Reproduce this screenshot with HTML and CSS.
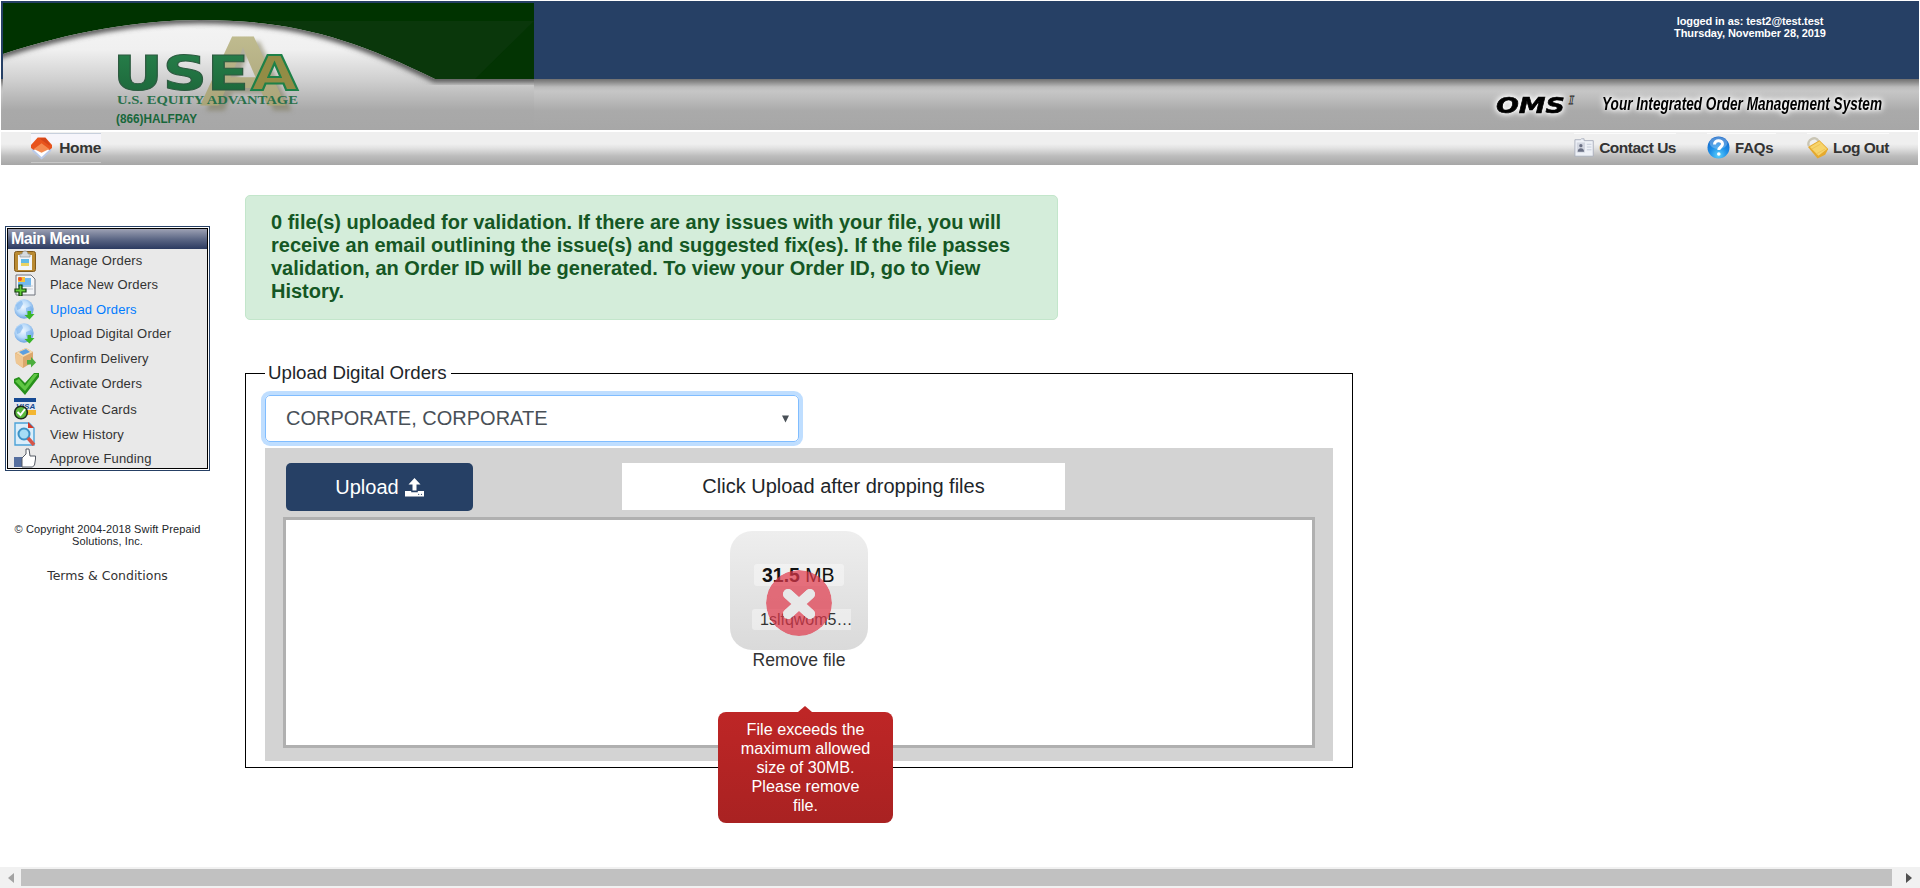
FILE: index.html
```html
<!DOCTYPE html>
<html lang="en">
<head>
<meta charset="utf-8">
<title>Upload Digital Orders</title>
<link rel="stylesheet" href="styles.css">
</head>
<body>
<header class="banner">
  <svg class="logo" width="531" height="127" viewBox="3 3 531 127">
    <defs>
      <linearGradient id="dome" gradientUnits="userSpaceOnUse" x1="0" y1="20" x2="0" y2="130">
        <stop offset="0" stop-color="#f4f4f4"/><stop offset=".27" stop-color="#f0f0f0"/>
        <stop offset=".55" stop-color="#cfcfcf"/><stop offset=".82" stop-color="#a9a9a9"/><stop offset="1" stop-color="#a7a7a7"/>
      </linearGradient>
      <linearGradient id="gold" x1="0" y1="0" x2="0" y2="1">
        <stop offset="0" stop-color="#c6c296"/><stop offset="1" stop-color="#a39d72"/>
      </linearGradient>
      <linearGradient id="leaf" x1="0" y1="0" x2="0" y2="1">
        <stop offset="0" stop-color="#28824c"/><stop offset="1" stop-color="#1b6438"/>
      </linearGradient>
      <filter id="soft"><feGaussianBlur stdDeviation="2.6"/></filter>
      <clipPath id="domeclip"><path d="M3 54C70 32 140 20 200 20C290 20 350 37 435 79H534V130H3Z"/></clipPath>
    </defs>
    <rect x="3" y="3" width="531" height="127" fill="#003300"/>
    <path d="M260 21H534V79H430C380 50 330 35 260 21Z" fill="#0a370b"/>
    <path d="M534 21V79H475Z" fill="#033403"/>
    <g clip-path="url(#domeclip)">
      <rect x="3" y="3" width="531" height="127" fill="url(#dome)"/>
      <path d="M-10 58L3 54C70 32 140 20 200 20C290 20 350 37 435 79H545" fill="none" stroke="#555" stroke-width="7" filter="url(#soft)"/>
    </g>
    <text class="gold-mark" x="197" y="106" font-size="101" textLength="92" lengthAdjust="spacingAndGlyphs" fill="url(#gold)">A</text>
    <text class="brand ext" x="113" y="90" font-size="48" textLength="136" lengthAdjust="spacingAndGlyphs" fill="url(#leaf)" stroke="#2d5a40" stroke-width="1">USE</text>
    <text class="brand ext" x="251" y="90" font-size="48" textLength="47" lengthAdjust="spacingAndGlyphs" fill="#938c45" stroke="#1e8148" stroke-width="1.8">A</text>
    <text class="motto" x="117" y="103.500" font-size="13" textLength="181" lengthAdjust="spacingAndGlyphs" fill="#28704a">U.S. EQUITY ADVANTAGE</text>
    <text class="brand" x="116" y="122.500" font-size="12.500" textLength="81" lengthAdjust="spacingAndGlyphs" fill="#17673a">(866)HALFPAY</text>
  </svg>
  <div class="banner-side">
    <p class="login">logged in as: test2@test.test<br>Thursday, November 28, 2019</p>
    <svg class="tagline" width="400" height="36" viewBox="1488 84 400 36">
      <text class="oms" x="1496" y="113" font-size="21.500" textLength="69" lengthAdjust="spacingAndGlyphs">OMS</text>
      <text class="sup" x="1569" y="104" font-size="12">I</text>
      <text class="slogan" x="1602" y="109.500" font-size="18" textLength="280" lengthAdjust="spacingAndGlyphs">Your Integrated Order Management System</text>
    </svg>
  </div>
</header>
<nav class="navbar">
  <a class="nav-item home">
    <svg width="22" height="24" viewBox="0 0 22 24"><path d="M1 10h20v5L11 24 1 15z" fill="#b9c9e8"/><path d="M3 12l8-4 8 4v2l-8 7.500L3 14z" fill="#fff"/><path d="M0 9L7 1h8l7 8v3l-3 2-8-5-8 5-3-2z" fill="#e8531c"/><path d="M3 13l8-6 8 6-8 4z" fill="#f58a4f"/><path d="M9 2l6-.500 5 7-1 1z" fill="#d2451a"/></svg>
    <span class="w-home">Home</span></a>
  <div class="nav-right">
    <a class="nav-item contact">
      <svg width="22" height="21" viewBox="0 0 22 21"><path d="M1 2h6l1-1h3v2h10v17H1z" fill="#eef1f7" stroke="#a9aebb"/><rect x="3" y="5" width="9" height="11" fill="#d3d7e1"/><circle cx="7.500" cy="8.500" r="1.800" fill="#6a7084"/><path d="M4 15c0-5 7-5 7 0z" fill="#6a7084"/><path d="M14 7h5M14 10h5M14 13h5" stroke="#c3c9d8"/></svg>
      <span class="w-contact">Contact Us</span></a>
    <a class="nav-item faqs">
      <svg width="23" height="23" viewBox="0 0 23 23"><defs><radialGradient id="ball" cx=".5" cy=".85" r=".8"><stop offset="0" stop-color="#5cd0fb"/><stop offset=".5" stop-color="#1d8fe8"/><stop offset="1" stop-color="#1467c8"/></radialGradient></defs><circle cx="11.500" cy="11.500" r="11" fill="url(#ball)"/><ellipse cx="11.500" cy="7" rx="9" ry="6" fill="#fff" opacity=".25"/><path d="M7.500 8.500c0-5 8-5 8-.500 0 3-3.700 3-3.700 6" fill="none" stroke="#fff" stroke-width="3"/><circle cx="11.800" cy="18" r="1.800" fill="#fff"/></svg>
      <span class="w-faqs">FAQs</span></a>
    <a class="nav-item logout">
      <svg width="22" height="23" viewBox="0 0 22 23"><path d="M2 10C-1 4 9-2 12 5" fill="none" stroke="#c9c5b4" stroke-width="2.500"/><path d="M1 11L13 4l9 9-3 6-8 4z" fill="#e5a92e"/><path d="M3 11l10-6 8 8-9 7z" fill="#f7d46c"/><path d="M5 13l9-5M10 18l9-5" stroke="#edc356" stroke-width="1"/></svg>
      <span class="w-logout">Log Out</span></a>
  </div>
</nav>
<div class="page">
  <aside class="sidebar">
    <div class="menu"><div class="menu-inner">
      <h2 class="menu-title">Main Menu</h2>
      <a class="row r24"><svg class="ico" viewBox="0 0 22 22"><rect x=".5" y="1.500" width="21" height="20" rx="2" fill="#b98a32" stroke="#80591a"/><path d="M4 5h14v15H4z" fill="#f3f6fa"/><path d="M6 4h2c0-4 6-4 6 0h2v3H6z" fill="#d6dadd" stroke="#8f9494" stroke-width=".7"/><path d="M7 9h8v7H7z" fill="#61b9e7"/><path d="M7 13h8v3H7z" fill="#e9d264"/></svg><span>Manage Orders</span></a>
      <a class="row r26"><svg class="ico" viewBox="0 0 22 22"><path d="M2 1h15l4 4v16H2z" fill="#f3f5f8" stroke="#6f737c"/><path d="M4 4h13v9H4z" fill="#72b9ed"/><path d="M4 3h7v5H4z" fill="#f5c33a"/><circle cx="6" cy="5" r="2" fill="#e9502d"/><path d="M10 12h9M10 15h9" stroke="#c5c9d0"/><path d="M5 11h3v4h4v3H8v4H5v-4H1v-3h4z" fill="#62cd38" stroke="#123f0c" stroke-width="1.200"/></svg><span>Place New Orders</span></a>
      <a class="row r24b active"><svg class="ico" viewBox="0 0 22 22"><defs><radialGradient id="globe" cx=".45" cy=".4" r=".6"><stop offset="0" stop-color="#eef7ff"/><stop offset=".55" stop-color="#bcdcfa"/><stop offset="1" stop-color="#6ba3e2"/></radialGradient></defs><circle cx="10" cy="10" r="9.700" fill="url(#globe)"/><path d="M2 6q3-4 6-4l1 3-3 5-3 1zM12 9l5-2 2 4-4 5-3-3z" fill="#6eaaea" opacity=".55"/><path d="M13.500 12h3.500v3h3.500L15.500 20.500 10.500 16h3z" fill="#39b528"/></svg><span>Upload Orders</span></a>
      <a class="row r24b"><svg class="ico" viewBox="0 0 22 22"><circle cx="10" cy="10" r="9.700" fill="url(#globe)"/><path d="M2 6q3-4 6-4l1 3-3 5-3 1zM12 9l5-2 2 4-4 5-3-3z" fill="#6eaaea" opacity=".55"/><path d="M13.500 12h3.500v3h3.500L15.500 20.500 10.500 16h3z" fill="#39b528"/></svg><span>Upload Digital Order</span></a>
      <a class="row r26"><svg class="ico" viewBox="0 0 22 22"><path d="M1 6l11-5 7 4v10L9 21l-7-5z" fill="#dba76c"/><path d="M1 6l8 4v11l-7-5z" fill="#efc793"/><path d="M2 6l10-5 7 4-10 5z" fill="#f5d9ad"/><path d="M5 5l7-3 4 3-7 3z" fill="#5b9fe0"/><path d="M13 13h4v-3l5 5.500-5 5v-3h-4z" fill="#4cae3e"/></svg><span>Confirm Delivery</span></a>
      <a class="row r26"><svg class="ico wide" viewBox="0 0 25 22"><path d="M0 10L0 6l5-2 6 6L20 0h5v4L11 22z" fill="#27901b"/><path d="M1 8l4-2 6 7L20 1h4L11 18z" fill="#5fc744"/></svg><span>Activate Orders</span></a>
      <a class="row r26"><svg class="ico" viewBox="0 0 22 22"><path d="M0 0h22v4H0z" fill="#174a93"/><path d="M0 4h22v8H0z" fill="#e3e7f0"/><path d="M10 12h12v5H10z" fill="#f3b632"/><text x="2" y="11" class="visa">VISA</text><circle cx="7" cy="14.500" r="6.300" fill="#5bb93c" stroke="#1b2b1c" stroke-width="1.600"/><path d="M3.500 14l3 3 4.500-6" fill="none" stroke="#fff" stroke-width="2"/></svg><span>Activate Cards</span></a>
      <a class="row r24b"><svg class="ico tall" viewBox="0 0 22 24"><path d="M1 1h14l5 5v17H1z" fill="#dbeefa" stroke="#4ca3d8" stroke-width="1.400"/><path d="M14 0l6 6h-6z" fill="#d43a28"/><circle cx="10" cy="12" r="5.500" fill="#a5def6" stroke="#3d92c5" stroke-width="2"/><path d="M14 16l6 7" stroke="#d65548" stroke-width="3.500"/></svg><span>View History</span></a>
      <a class="row r24b"><svg class="ico" viewBox="0 0 22 20"><path d="M0 9h8v10H0z" fill="#566f9f"/><path d="M8 10l4-4V1h3l1 7h5.500v3l-1 6-2 2H8z" fill="#fff" stroke="#555a64" stroke-width="1"/></svg><span>Approve Funding</span></a>
    </div></div>
    <p class="copyright">© Copyright 2004-2018 Swift Prepaid<br>Solutions, Inc.</p>
    <p class="terms">Terms &amp; Conditions</p>
  </aside>
  <main class="content">
    <div class="alert">0 file(s) uploaded for validation. If there are any issues with your file, you will<br>receive an email outlining the issue(s) and suggested fix(es). If the file passes<br>validation, an Order ID will be generated. To view your Order ID, go to View<br>History.</div>
    <fieldset class="orders">
      <legend>Upload Digital Orders</legend>
      <div class="select"><span>CORPORATE, CORPORATE</span><svg width="8" height="8" viewBox="0 0 8 8"><path d="M0 .5h7L3.500 7.500z" fill="#495057"/></svg></div>
      <section class="uploader">
        <div class="toolbar">
          <button class="upload">Upload <svg width="19" height="19" viewBox="0 0 19 19"><path fill="#fff" d="M9.500 0l6 6.500h-4V12.500h-4V6.500h-4zM0 13h6.200v1.200h6.600V13H19v5.500H0z"/><circle cx="13.700" cy="16.300" r=".6" fill="#264065"/><circle cx="16.500" cy="16.300" r=".6" fill="#264065"/></svg></button>
          <div class="hint">Click Upload after dropping files</div>
        </div>
        <div class="dropzone">
          <div class="preview">
            <div class="thumb">
              <div class="size"><b>31.5</b> MB</div>
              <div class="name">1slfqwom5…</div>
              <svg class="cross" width="66" height="66" viewBox="0 0 66 66"><defs><mask id="crosscut"><circle cx="33" cy="33" r="33" fill="#fff"/><path d="M22 24l22 20M44 24l-22 20" stroke="#000" stroke-width="10" stroke-linecap="round"/></mask></defs><circle cx="33" cy="33" r="33" fill="#e0374a" fill-opacity=".7" mask="url(#crosscut)"/><path d="M22 24l22 20M44 24l-22 20" stroke="#e8e8e8" stroke-width="10" stroke-linecap="round"/></svg>
            </div>
            <a class="remove">Remove file</a>
            <div class="error">File exceeds the<br>maximum allowed<br>size of 30MB.<br>Please remove<br>file.</div>
          </div>
        </div>
      </section>
    </fieldset>
  </main>
</div>
<div class="scrollbar">
  <svg width="6" height="10" viewBox="0 0 6 10"><path d="M6 0v10L0 5z" fill="#a3a3a3"/></svg>
  <div class="scroll-thumb"></div>
  <svg width="6" height="10" viewBox="0 0 6 10"><path d="M0 0v10l6-5z" fill="#505050"/></svg>
</div>
</body>
</html>
```
FILE: styles.css
```css
* { box-sizing: border-box; }
body {
  margin: 0;
  height: 888px;
  display: flex;
  flex-direction: column;
  overflow: hidden;
  background: #fff;
  color: #212529;
  font-family: "Liberation Sans", Arial, sans-serif;
}
p, h2 { margin: 0; }

.banner {
  display: flex;
  justify-content: space-between;
  height: 129px;
  margin: 1px 1px 2px;
  padding: 2px 0 0 2px;
  background: linear-gradient(#264065 0 78px, #707070 78px, #8a8a8a 81px, #bbb 86px, #c6c6c6 90px, #bcbcbc 98px, #aaa 110px, #a7a7a7 129px);
}
.logo { display: block; }
.banner-side {
  display: flex;
  flex-direction: column;
  justify-content: space-between;
  width: 431px;
  padding: 12px 0 10px;
}
.login {
  width: 200px;
  margin-left: 162px;
  color: #fff;
  font: bold 11px/12px "Liberation Sans", Arial, sans-serif;
  letter-spacing: -.1px;
  text-align: center;
}
.gold-mark, .brand, .visa { font-family: "Liberation Sans", Arial, sans-serif; font-weight: bold; }
.gold-mark { filter: drop-shadow(6px 5px 2px rgba(120, 114, 78, .5)); }
.ext { font-family: "DejaVu Sans", Verdana, sans-serif; }
.motto, .sup { font-family: "Liberation Serif", serif; font-weight: bold; }
.tagline { overflow: visible; }
.oms, .slogan {
  font-family: "Liberation Sans", Arial, sans-serif;
  font-weight: bold;
  font-style: italic;
  filter: drop-shadow(0 0 2px #fff) drop-shadow(0 0 3px #fff);
}
.oms { font-family: "DejaVu Sans", Verdana, sans-serif; stroke: #000; stroke-width: .6px; }
.sup { fill: #eee; stroke: #333; stroke-width: .9px; font-style: italic; }
.visa { font-size: 8px; font-style: italic; fill: #174a93; }

.navbar {
  display: flex;
  justify-content: space-between;
  height: 33px;
  margin: 0 2px 0 1px;
  padding: 1px 29px 2px 30px;
  background: linear-gradient(#efefef 0 12px, #e2e2e2 16px, #bdbdbd 24px, #a6a6a6 33px);
}
.nav-right { display: flex; gap: 31px; }
.nav-item {
  display: flex;
  align-items: center;
  gap: 5px;
  height: 30px;
  color: #333;
  font-weight: bold;
  white-space: nowrap;
}
.home {
  gap: 7px;
  width: 70px;
  border-top: 1px solid #c8d0dd;
  border-bottom: 1px solid #c8c8c8;
  background: linear-gradient(#f6f5fb 0 8px, transparent 13px);
}
.contact, .faqs, .logout { border-top: 1px solid #fbfbfb; height: 28px; }
.contact { width: 102px; }
.faqs { width: 69px; }
.logout { width: 82px; }
.w-home { font-size: 15.5px; letter-spacing: -.3px; }
.w-contact { font-size: 15.5px; letter-spacing: -.5px; }
.w-faqs { font-size: 15px; letter-spacing: -.2px; }
.w-logout { font-size: 15.5px; letter-spacing: -.5px; }

.page { display: grid; grid-template-columns: 245px 1fr; flex: 1; min-height: 0; }
.sidebar { padding: 61px 35px 0 5px; }
.menu { height: 245px; padding: 1px; border: 1px solid #264065; }
.menu-inner { height: 241px; border: 1px solid #000; background: #e9e9e9; }
.menu-title {
  height: 20px;
  padding-left: 3px;
  background: linear-gradient(#9da1b4, #5d6886 50%, #2b3a60);
  color: #fff;
  font-size: 16px;
  line-height: 20px;
  letter-spacing: -.5px;
}
.row {
  display: grid;
  grid-template-columns: 36px 1fr;
  align-items: center;
  padding-left: 6px;
  color: #333;
  font-size: 13px;
  letter-spacing: .17px;
  white-space: nowrap;
}
.active { color: #007bff; }
.ico { display: block; width: 22px; height: 22px; }
.wide { width: 25px; }
.tall { height: 24px; }
.r24 { height: 23px; }
.r24b { height: 24px; }
.r26 { height: 25.5px; }
.copyright { margin-top: 52px; font-size: 11px; line-height: 12px; letter-spacing: .12px; text-align: center; white-space: nowrap; }
.terms { margin-top: 22px; color: #333; font: 12.5px/14px "DejaVu Sans", Verdana, sans-serif; text-align: center; white-space: nowrap; }

.content { padding-top: 30px; }
.alert {
  width: 813px;
  height: 125px;
  padding: 15px 25px;
  border: 1px solid #c3e6cb;
  border-radius: 5px;
  background: #d4edda;
  color: #155724;
  font-size: 20px;
  font-weight: bold;
  line-height: 23px;
  white-space: nowrap;
}
.orders { width: 1108px; height: 405px; margin: 43px 0 0; padding: 0 19px; border: 1px solid #000; }
legend { padding: 0 4px 0 3px; font-size: 18.7px; line-height: 20px; }
.select {
  display: flex;
  align-items: center;
  justify-content: space-between;
  width: 534px;
  height: 47px;
  margin-top: 12px;
  padding: 0 8px 0 20px;
  border: 1px solid #80bdff;
  border-radius: 5px;
  box-shadow: 0 0 0 4px rgba(0, 123, 255, .25);
  color: #495057;
  font-size: 20px;
}
.uploader { height: 313px; margin-top: 6px; padding: 15px 18px; background: #d3d3d3; }
.toolbar { display: flex; align-items: flex-start; gap: 149px; height: 54px; padding-left: 3px; }
.upload {
  display: flex;
  align-items: center;
  justify-content: center;
  gap: 6px;
  width: 187px;
  height: 48px;
  padding: 0;
  border: 0;
  border-radius: 5px;
  background: #264065;
  color: #fff;
  font: 20px "Liberation Sans", Arial, sans-serif;
}
.hint { width: 443px; height: 47px; background: #fff; font-size: 20px; line-height: 46px; text-align: center; }
.dropzone { display: flex; justify-content: center; height: 231px; padding-top: 11px; border: 3px solid #b0b0b0; background: #fff; }
.preview { position: relative; width: 138px; height: 140px; }
.thumb {
  position: relative;
  display: flex;
  flex-direction: column;
  align-items: flex-start;
  gap: 23px;
  height: 119px;
  padding: 33px 17px 0 22px;
  border-radius: 22px;
  background: linear-gradient(#eee, #dadada);
  color: #111;
}
.size { width: 90px; height: 22px; margin-left: 2px; padding-left: 8px; border-radius: 3px; background: rgba(255, 255, 255, .4); font-size: 19.5px; line-height: 22px; white-space: nowrap; }
.name { width: 99px; height: 21px; padding-left: 8px; border-radius: 3px 0 0 3px; background: rgba(255, 255, 255, .4); color: #333; font-size: 16px; line-height: 21px; white-space: nowrap; }
.cross { position: absolute; left: 36px; top: 39px; }
.remove { display: block; color: #333; font-size: 17.6px; line-height: 20px; text-align: center; }
.error {
  position: absolute;
  left: -12px;
  top: 181px;
  width: 175px;
  height: 111px;
  padding: 8px 0;
  border-radius: 8px;
  background: linear-gradient(#be2626, #a92222);
  color: #fff;
  font-size: 16.2px;
  line-height: 19px;
  text-align: center;
}
.error::after {
  content: "";
  position: absolute;
  left: 80px;
  top: -6px;
  border: solid transparent;
  border-width: 0 7px 6px;
  border-bottom-color: #be2626;
}
.scrollbar { display: flex; align-items: center; gap: 7px; height: 21px; padding: 0 8px; background: #f1f1f1; }
.scroll-thumb { flex: 1; height: 17px; margin-right: 7px; background: #c1c1c1; }
```
